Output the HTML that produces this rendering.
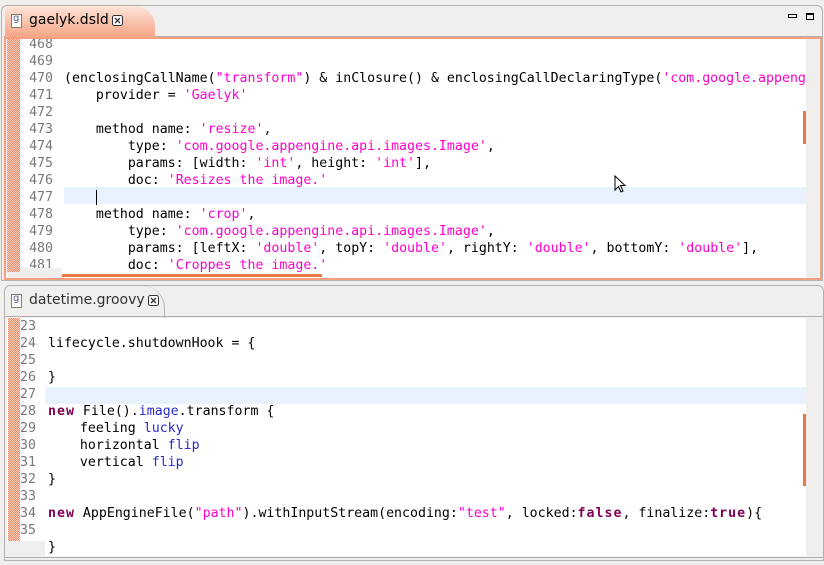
<!DOCTYPE html>
<html><head><meta charset="utf-8"><style>
*{margin:0;padding:0;box-sizing:border-box}
body{width:824px;height:565px;background:#f0efed;position:relative;overflow:hidden;font-family:"DejaVu Sans Mono","Liberation Mono",monospace}
.abs{position:absolute}
.code{position:absolute;font-size:13.25px;line-height:17px;white-space:pre;color:#000}
.s{color:#f0c}.k{color:#7f0055;font-weight:bold;letter-spacing:1px}.b{color:#2a2ad0}
.ln{position:absolute;font-size:13.25px;line-height:17px;white-space:pre;color:#787878;text-align:right}
.hatch{background:repeating-conic-gradient(#f08a68 0 25%,#fbd2c0 0 50%) 0 0/2px 2px}
.tabt{font-family:"DejaVu Sans","Liberation Sans",sans-serif;font-size:13px}
</style></head><body>
<!-- top panel -->
<div class="abs" style="left:1px;top:5px;width:822px;height:276px;border:1px solid #b5b3b0;border-radius:6px 6px 0 0;background:#f0efed"></div>
<div class="abs" style="left:4px;top:36px;width:818px;height:1px;background:#b0aeab"></div>
<div class="abs" style="left:5px;top:6px;width:150px;height:32px;background:linear-gradient(#fde4d8,#f5a384);border-radius:6px 20px 0 0"></div>
<div class="abs" style="left:11px;top:14px;width:11px;height:14px;border:1px solid #8a7c60;background:#fff"></div>
<div class="abs tabt" style="left:13px;top:13px;font-size:10px;color:#5a5a8a">g</div>
<div class="abs tabt" style="left:29px;top:12px;font-size:14px;color:#000">gaelyk.dsld</div>
<svg class="abs" style="left:112px;top:15px" width="11" height="11"><rect x="0.5" y="0.5" width="10" height="10" rx="2" fill="#fff" stroke="#333"/><path d="M3 3L8 8M8 3L3 8" stroke="#333" stroke-width="1.3"/></svg>
<div class="abs" style="left:788px;top:14px;width:9px;height:4px;border:1px solid #000"></div>
<div class="abs" style="left:806px;top:13px;width:8px;height:7px;border:1px solid #000;border-top-width:2px"></div>
<div class="abs" style="left:4px;top:37px;width:818px;height:243px;border:2px solid #f4a080;background:#fff"></div>
<div class="abs hatch" style="left:7px;top:39px;width:13px;height:233px"></div>
<div class="abs" style="left:7px;top:272px;width:55px;height:6px;background:#f0efed"></div>
<div class="abs" style="left:806px;top:39px;width:13px;height:239px;background:#f0efed"></div>
<div class="abs" style="left:803px;top:111px;width:3px;height:33px;background:#e8784a"></div>
<div class="abs" style="left:64px;top:187px;width:742px;height:17px;background:#e8f2fe"></div>
<div class="abs" style="left:62px;top:274px;width:260px;height:3px;background:#e8784a"></div>
<div class="abs" style="left:20px;top:39px;width:786px;height:233px;overflow:hidden">
<div class="ln" style="left:0;top:-3px;width:33px">468
469
470
471
472
473
474
475
476
477
478
479
480
481</div>
<div class="code" style="left:44px;top:-3px">

(enclosingCallName(<span class="s">"transform"</span>) &amp; inClosure() &amp; enclosingCallDeclaringType(<span class="s">'com.google.appengine.api.images.Image'</span>)).accept {
    provider = <span class="s">'Gaelyk'</span>

    method name: <span class="s">'resize'</span>,
        type: <span class="s">'com.google.appengine.api.images.Image'</span>,
        params: [width: <span class="s">'int'</span>, height: <span class="s">'int'</span>],
        doc: <span class="s">'Resizes the image.'</span>
    <span style="border-left:1.5px solid #000"></span>
    method name: <span class="s">'crop'</span>,
        type: <span class="s">'com.google.appengine.api.images.Image'</span>,
        params: [leftX: <span class="s">'double'</span>, topY: <span class="s">'double'</span>, rightY: <span class="s">'double'</span>, bottomY: <span class="s">'double'</span>],
        doc: <span class="s">'Croppes the image.'</span></div>
</div>
<div class="abs" style="left:20px;top:268px;width:42px;height:10px;background:#f0efed"></div>
<!-- cursor -->
<svg class="abs" style="left:614px;top:175px" width="14" height="20"><path d="M1 1 L1 15 L4.5 11.5 L7 17 L9 16 L6.5 10.5 L11 10.5 Z" fill="#fff" stroke="#000" stroke-width="1"/></svg>
<!-- bottom panel -->
<div class="abs" style="left:4px;top:285px;width:820px;height:276px;border:1px solid #b5b3b0;border-radius:6px 6px 0 0;background:#f0efed"></div>
<div class="abs" style="left:5px;top:286px;width:160px;height:32px;background:#f0efed;border-right:1px solid #b5b3b0;border-radius:6px 22px 0 0"></div>
<div class="abs" style="left:5px;top:316px;width:818px;height:1px;background:#b0aeab"></div>
<div class="abs" style="left:11px;top:294px;width:11px;height:14px;border:1px solid #8a7c60;background:#fff"></div>
<div class="abs tabt" style="left:13px;top:293px;font-size:10px;color:#5a5a8a">g</div>
<div class="abs tabt" style="left:29px;top:292px;font-size:14px;color:#333">datetime.groovy</div>
<svg class="abs" style="left:148px;top:295px" width="11" height="11"><rect x="0.5" y="0.5" width="10" height="10" rx="2" fill="#fff" stroke="#333"/><path d="M3 3L8 8M8 3L3 8" stroke="#333" stroke-width="1.3"/></svg>
<div class="abs" style="left:7px;top:318px;width:799px;height:238px;background:#fff"></div>
<div class="abs hatch" style="left:8px;top:318px;width:12px;height:223px"></div>
<div class="abs" style="left:7px;top:541px;width:38px;height:15px;background:#f0efed"></div>
<div class="abs" style="left:806px;top:318px;width:16px;height:238px;background:#f0efed"></div>
<div class="abs" style="left:803px;top:414px;width:3px;height:72px;background:#e8784a"></div>
<div class="abs" style="left:45px;top:387px;width:761px;height:17px;background:#e8f2fe"></div>
<div class="ln" style="left:20px;top:318px;width:17px;text-align:left">23
24
25
26
27
28
29
30
31
32
33
34
35</div>
<div class="code" style="left:48px;top:318px">
lifecycle.shutdownHook = {

}

<span class="k">new</span> File().<span class="b">image</span>.transform {
    feeling <span class="b">lucky</span>
    horizontal <span class="b">flip</span>
    vertical <span class="b">flip</span>
}

<span class="k">new</span> AppEngineFile(<span class="s">"path"</span>).withInputStream(encoding:<span class="s">"test"</span>, locked:<span class="k">false</span>, finalize:<span class="k">true</span>){

}</div>
<div class="abs" style="left:5px;top:557px;width:818px;height:1px;background:#b0aeab"></div>
</body></html>
